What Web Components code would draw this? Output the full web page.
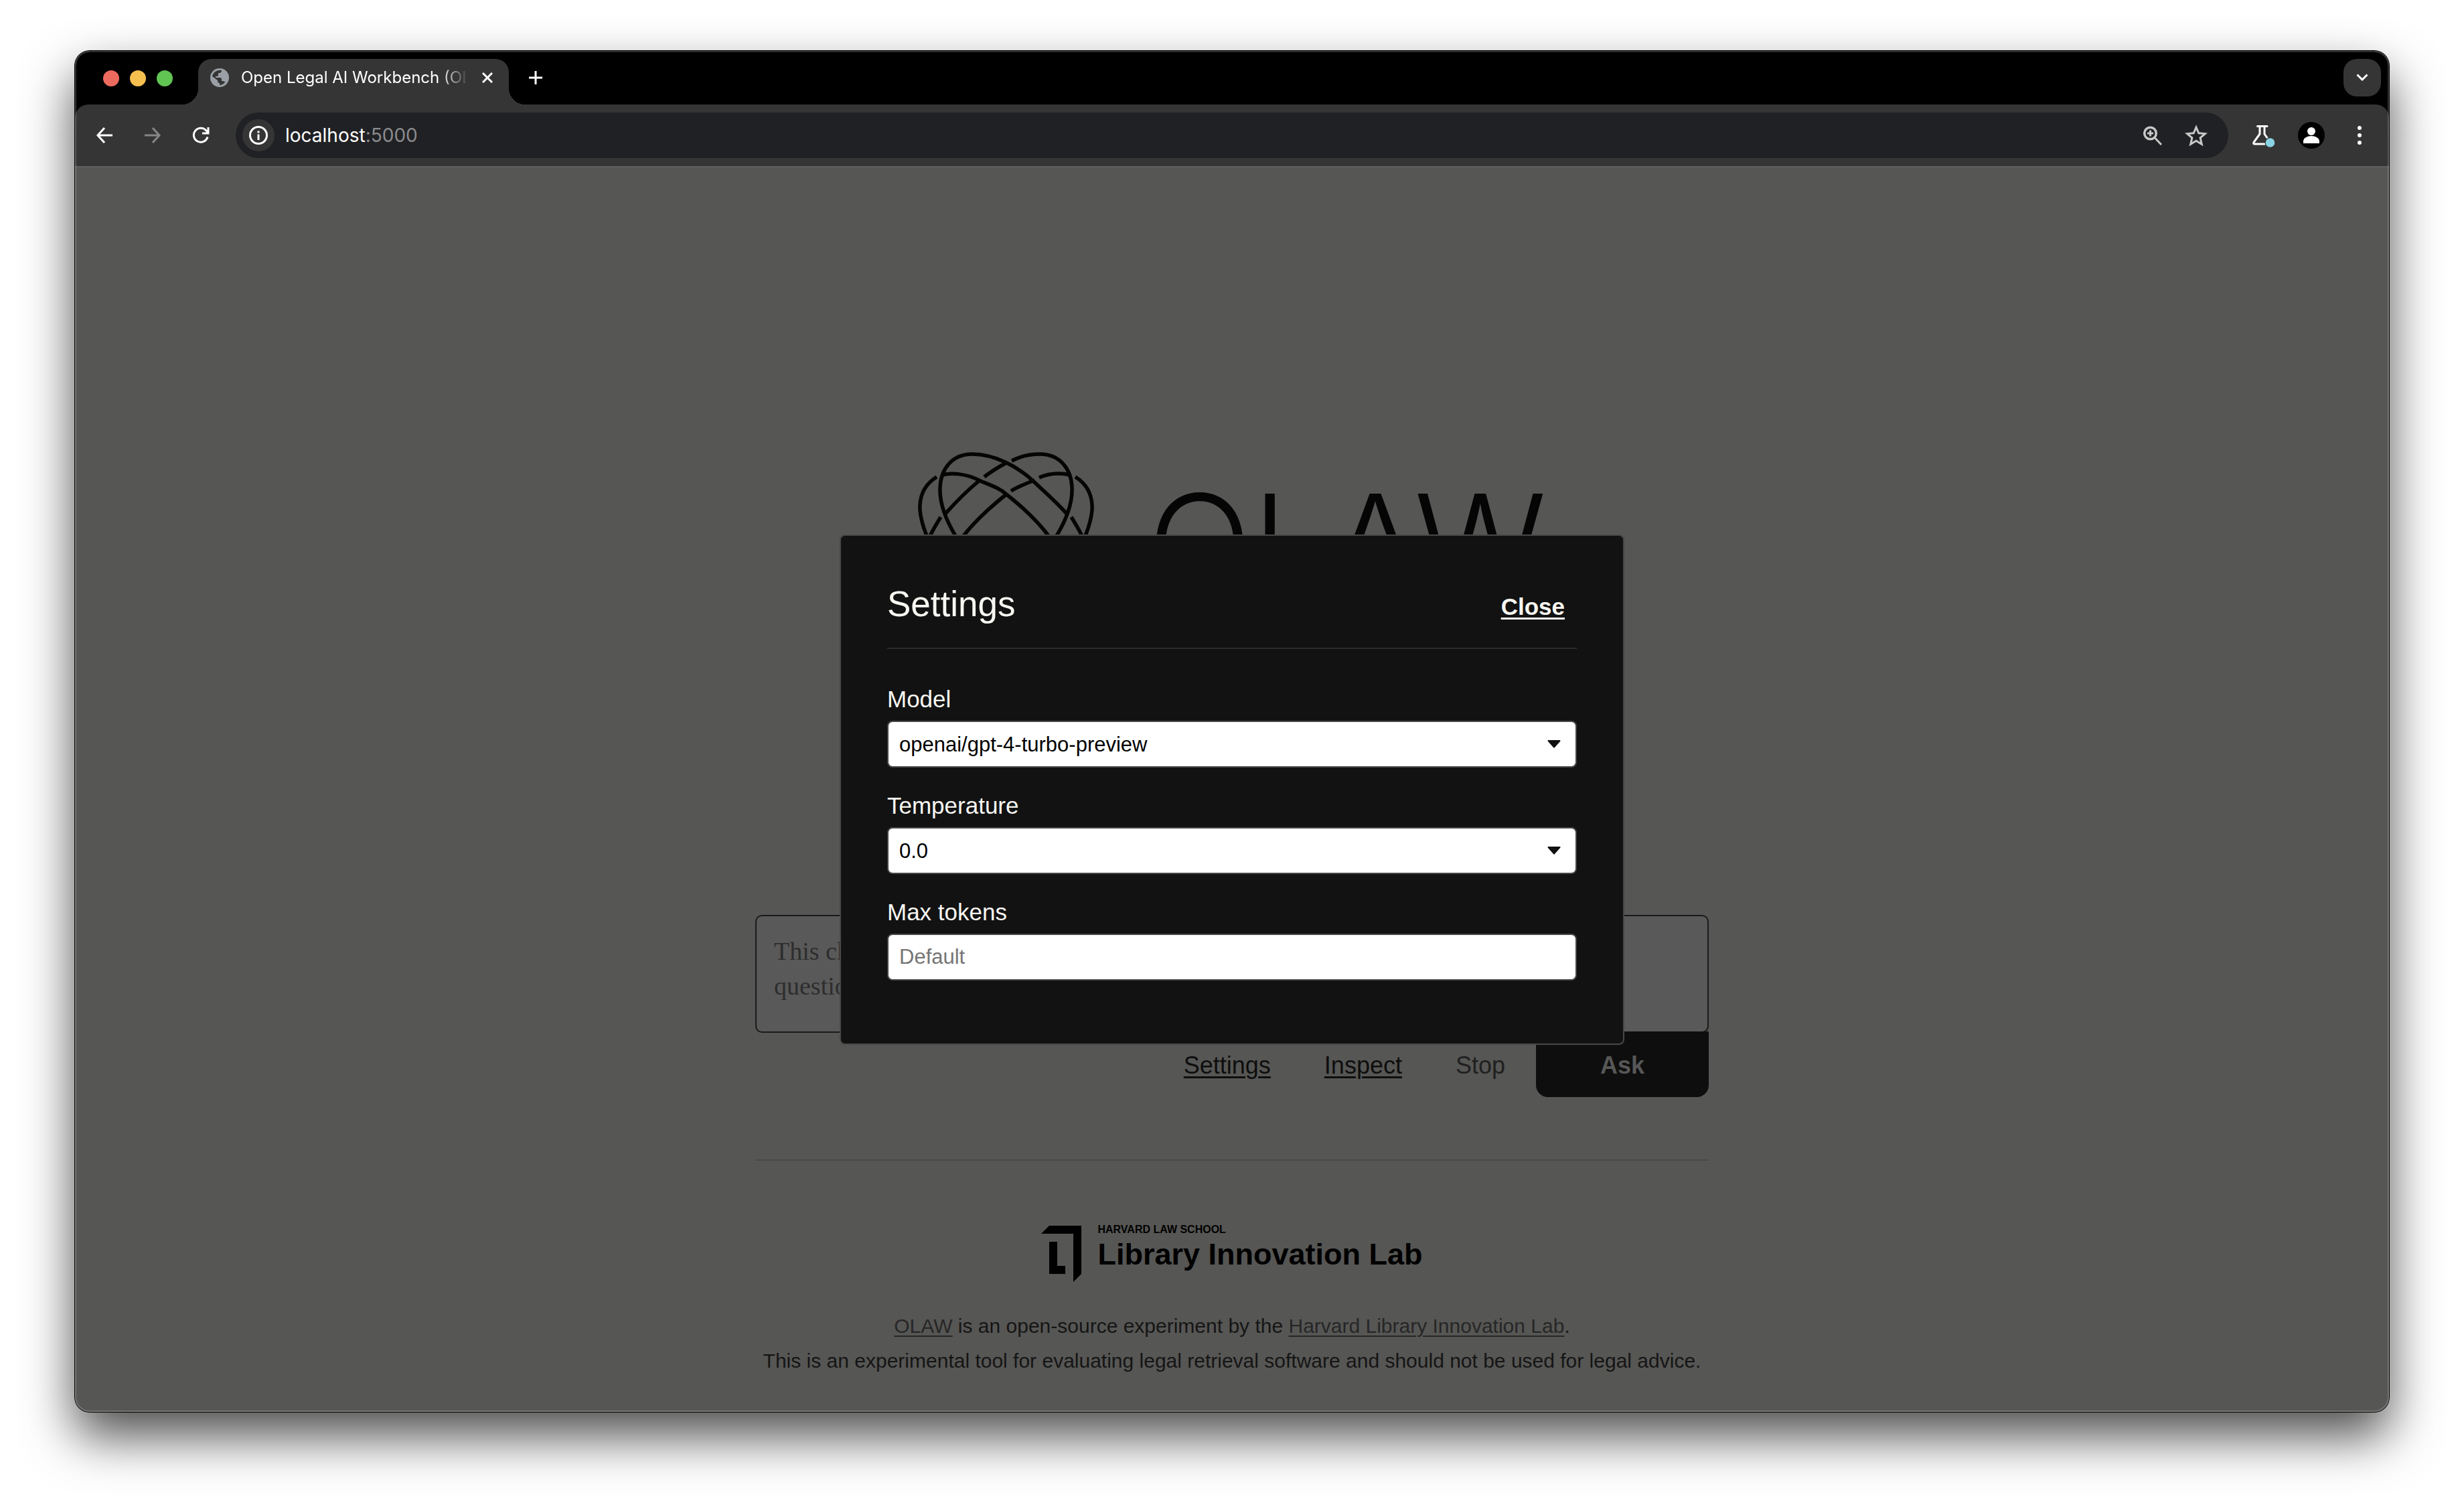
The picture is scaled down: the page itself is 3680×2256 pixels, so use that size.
<!DOCTYPE html>
<html lang="en">
<head>
<meta charset="utf-8">
<title>Open Legal AI Workbench (OLAW)</title>
<style>
  html, body { margin: 0; height: 100%; background: #fff; }
  body { font-family: "Liberation Sans", Arial, sans-serif; }
</style>
</head>
<body>
<browser-window>
  <tab-strip slot="tabs"><browser-tab>Open Legal AI Workbench (OLAW)</browser-tab></tab-strip>
  <browser-toolbar slot="toolbar" host="localhost" port=":5000"></browser-toolbar>
  <olaw-app>
    <olaw-logo slot="logo"></olaw-logo>
    <chat-form slot="chat"></chat-form>
    <page-footer slot="footer"></page-footer>
    <settings-dialog slot="dialog">
      <setting-field label="Model" kind="select" options="openai/gpt-4-turbo-preview"></setting-field>
      <setting-field label="Temperature" kind="select" options="0.0"></setting-field>
      <setting-field label="Max tokens" kind="number" placeholder="Default"></setting-field>
    </settings-dialog>
  </olaw-app>
</browser-window>

<script>
const define = (name, render) => customElements.define(name, class extends HTMLElement {
  connectedCallback() {
    if (this.shadowRoot) return;
    this.attachShadow({ mode: 'open' }).innerHTML =
      '<style>*{box-sizing:border-box}button{font:inherit;border:0;background:none;padding:0;margin:0;color:inherit}svg{display:block}</style>' + render(this);
  }
});

define('browser-window', () => `
<style>
  :host { display: flex; box-sizing: border-box; min-height: 100vh; padding: 76px 112px 148px; }
  .window { position: relative; flex: 1; display: flex; flex-direction: column; border-radius: 22px; overflow: hidden; background: #000; }
  .shadow { flex: 1; display: flex; border-radius: 22px; box-shadow: 0 0 0 1px #000, 0 36px 76px rgba(0,0,0,.7); }
  .window::after { content: ""; position: absolute; inset: 0; border-radius: 22px; box-shadow: inset 0 0 0 2px rgba(255,255,255,.2); pointer-events: none; }
  .page { flex: 1; display: flex; }
</style>
<div class="shadow"><div class="window">
  <slot name="tabs"></slot>
  <slot name="toolbar"></slot>
  <div class="page"><slot></slot></div>
</div></div>`);

define('tab-strip', () => `
<style>
  :host { display: flex; align-items: flex-start; height: 80px; box-sizing: border-box; padding: 12px 12px 0 42px; color: #fff; }
  .lights { display: flex; gap: 16px; padding-top: 17px; width: 142px; }
  .lights i { width: 24px; height: 24px; border-radius: 50%; }
  .plus { width: 56px; height: 56px; margin-left: 12px; display: grid; place-items: center; }
  .search { margin-left: auto; width: 56px; height: 56px; border-radius: 20px; background: #353535; display: grid; place-items: center; }
</style>
<div class="lights"><i style="background:#ed6a5f"></i><i style="background:#f5bf4f"></i><i style="background:#61c554"></i></div>
<slot></slot>
<button class="plus" aria-label="New tab"><svg width="20" height="20" viewBox="0 0 20 20"><path d="M10 0v20M0 10h20" stroke="#fff" stroke-width="3"/></svg></button>
<button class="search" aria-label="Search tabs"><svg width="18" height="12" viewBox="0 0 18 12"><path d="M1.500 1.500 9 9l7.500-7.500" fill="none" stroke="#fff" stroke-width="3"/></svg></button>`);

define('browser-tab', () => `
<style>
  :host { position: relative; display: flex; align-items: center; width: 464px; height: 68px; box-sizing: border-box; padding: 0 20px 12px 18px; background: #353535; border-radius: 20px 20px 0 0; }
  :host::before, :host::after { content: ""; position: absolute; bottom: 0; width: 24px; height: 24px; }
  :host::before { right: 100%; background: radial-gradient(circle at 0 0, transparent 24px, #353535 24px); }
  :host::after { left: 100%; background: radial-gradient(circle at 100% 0, transparent 24px, #353535 24px); }
  .title { flex: 1; margin: 0 20px 0 18px; font: 400 24px/32px Inter, sans-serif; color: #fff; white-space: nowrap; overflow: hidden;
    -webkit-mask-image: linear-gradient(90deg, #000 296px, transparent 340px); mask-image: linear-gradient(90deg, #000 296px, transparent 340px); }
  button { width: 24px; height: 24px; display: grid; place-items: center; }
</style>
<svg width="28" height="28" viewBox="0 0 28 28"><circle cx="14" cy="14" r="14" fill="#9aa0a6"/><path d="M17 3c0 2-1 4-3 4h-2v3c0 1-1 2-2 2H8v2h7c1 0 2 1 2 2v3h2c2 0 3 1 3 2-2 2-4 4-8 4v-3c-2 0-3-1-3-3v-1L3 12C4 7 9 2 17 3z" fill="#353535"/></svg>
<span class="title"><slot></slot></span>
<button aria-label="Close tab"><svg width="16" height="16" viewBox="0 0 16 16"><path d="M1 1l14 14M15 1L1 15" stroke="#fff" stroke-width="3"/></svg></button>`);

define('browser-toolbar', el => `
<style>
  :host { display: flex; align-items: center; height: 94px; box-sizing: border-box; padding: 0 20px; background: #353535; border-bottom: 2px solid #5f5f5f; border-radius: 20px 20px 0 0; color: #fff; }
  .nav { width: 48px; height: 48px; display: grid; place-items: center; margin-right: 24px; }
  .nav.last { margin-right: 28px; }
  .omni { flex: 1; height: 68px; border-radius: 34px; background: #202124; display: flex; align-items: center; padding: 0 24px 0 10px; margin-right: 28px; }
  .info { width: 48px; height: 48px; border-radius: 50%; background: #353535; display: grid; place-items: center; margin-right: 16px; }
  .url { flex: 1; font: 400 28px/40px Inter, sans-serif; }
  .url span { color: #8b8b8d; }
  .omni .act { width: 48px; height: 48px; display: grid; place-items: center; margin-left: 17px; }
  .tools { display: flex; gap: 24px; }
  .tools button { width: 48px; height: 48px; display: grid; place-items: center; }
</style>
<button class="nav" aria-label="Back"><svg width="24" height="24" viewBox="0 0 24 24"><path d="M12 1 2 12l10 11M2 12h22" fill="none" stroke="#fff" stroke-width="3"/></svg></button>
<button class="nav" aria-label="Forward"><svg width="24" height="24" viewBox="0 0 24 24"><path d="M12 1l10 11-10 11M22 12H0" fill="none" stroke="#868686" stroke-width="3"/></svg></button>
<button class="nav last" aria-label="Reload"><svg width="26" height="26" viewBox="0 0 26 26"><path d="M23 15.500A10.500 10.500 0 1 1 21 6l3 3.500M24 1v9h-9" fill="none" stroke="#fff" stroke-width="3"/></svg></button>
<div class="omni">
  <button class="info" aria-label="Site information"><svg width="28" height="28" viewBox="0 0 28 28"><circle cx="14" cy="14" r="12.500" fill="none" stroke="#fff" stroke-width="3"/><path d="M12.500 12.500h3V21h-3zM12.500 7.500h3v3h-3z" fill="#fff"/></svg></button>
  <div class="url">${el.getAttribute('host')}<span>${el.getAttribute('port')}</span></div>
  <button class="act" aria-label="Zoom"><svg width="28" height="29" viewBox="0 0 28 29"><g fill="none" stroke="#c7c7c7" stroke-width="3"><circle cx="10.500" cy="11" r="8.800" stroke-width="3.500"/><path d="M17 17.500 27 28M10.500 6.500v9M6 11h9"/></g></svg></button>
  <button class="act" aria-label="Bookmark"><svg width="34" height="32" viewBox="0 0 34 32"><path d="M17 4l3.800 8.800 9.600.8-7.300 6.300 2.200 9.400L17 24.300l-8.300 5 2.200-9.400-7.300-6.300 9.600-.8z" fill="none" stroke="#c7c7c7" stroke-width="3"/></svg></button>
</div>
<div class="tools">
<button aria-label="Experiments"><svg width="36" height="36" viewBox="0 0 36 36"><path d="M9.500 4.500H24M13 5v11L4 28.500q-1 2.500 1.500 2.500H21M20 5v11l5 7" fill="none" stroke="#fff" stroke-width="3" stroke-linecap="round"/><circle cx="28.500" cy="29" r="8" fill="#353535"/><circle cx="28.500" cy="29" r="6.800" fill="#8ad3e3"/></svg></button>
<button aria-label="Profile"><svg width="40" height="40" viewBox="0 0 40 40"><circle cx="20" cy="20" r="20" fill="#000"/><circle cx="20" cy="14" r="6" fill="#fff"/><path d="M8 32v-3c0-5 6-8 12-8s12 3 12 8v3z" fill="#fff"/></svg></button>
<button aria-label="Menu"><svg width="6" height="28" viewBox="0 0 6 28"><g fill="#fff"><circle cx="3" cy="3" r="3"/><circle cx="3" cy="14" r="3"/><circle cx="3" cy="25" r="3"/></g></svg></button>
</div>`);

define('olaw-app', () => `
<style>
  :host { position: relative; flex: 1; display: flex; justify-content: center; background: #565654; }
  main { display: flex; flex-direction: column; width: 1424px; max-width: 100%; }
  header { flex: 1; display: flex; align-items: center; justify-content: center; }
  .overlay { position: absolute; inset: 0; display: grid; place-items: center; }
</style>
<main>
  <header><slot name="logo"></slot></header>
  <slot name="chat"></slot>
  <slot name="footer"></slot>
</main>
<div class="overlay"><slot name="dialog"></slot></div>`);

define('olaw-logo', () => `
<style>
  :host { display: flex; align-items: center; gap: 78px; color: #050505; }
  h1 { margin: 0; padding-top: 6px; font: 350 205px/236px Inter, sans-serif; }
</style>
<svg width="266" height="266" viewBox="10 15 266 266" aria-hidden="true"><g fill="none" stroke="#050505" stroke-width="5.500">
  <path d="M67 140C52 115 43 90 44 68C45 40 62 18 92 18C125 18 160 36 185 60C205 79 220 92 233 107M240 112C245 120 251 130 256 140"/>
  <path d="M218 140C233 115 242 90 241 68C240 40 223 18 193 18C178 18 164 21 151 28M143 31C130 38 119 45 110 52M102 58C84 73 67 90 52 107M45 112C40 120 34 130 29 140"/>
  <path d="M24 140C17 122 13 108 14 94C15 75 23 62 39 52M47 49C60 46 82 46 104 58C121 65 133 69 143 78C167 97 189 117 206 140"/>
  <path d="M261 140C268 122 272 108 271 94C270 75 262 62 246 52M238 49C225 46 208 46 192 53M185 57C172 62 160 67 150 73M143 78C118 98 96 118 79 140"/>
  <path d="M24 140C50 200 95 250 143 278C190 250 235 200 261 140"/>
</g></svg>
<h1>OLAW</h1>`);

define('chat-form', () => `
<style>
  :host { display: block; font-size: 36px; line-height: 52px; color: #0e0e0e; }
  textarea { display: block; width: 100%; height: 176px; resize: none; margin: 0; padding: 26px; border: 2px solid #1a1a1a; border-radius: 10px; background: #595959; font: 38px/52px "Liberation Serif", Georgia, serif; color: #111; outline: 0; overflow: hidden; }
  textarea::placeholder { color: #2d2d2d; opacity: 1; }
  .row { position: relative; display: flex; justify-content: flex-end; align-items: center; margin-top: -2px; height: 98px; }
  button { padding: 4px 40px 0; height: 98px; }
  .link { text-decoration: underline; text-decoration-thickness: 3px; text-underline-offset: 4px; }
  .stop { color: #202020; margin-right: 6px; }
  .ask { width: 258px; background: #0e0e0e; color: #575757; font-weight: 700; border-radius: 0 0 18px 18px; }
</style>
<form>
  <textarea aria-label="Question" placeholder="This chatbot can look up court opinions to help answer&#10;questions about the law."></textarea>
  <div class="row">
    <button type="button" class="link">Settings</button>
    <button type="button" class="link">Inspect</button>
    <button type="button" class="stop" disabled>Stop</button>
    <button type="button" class="ask">Ask</button>
  </div>
</form>`);

define('page-footer', () => `
<style>
  :host { display: flex; flex-direction: column; align-items: center; margin-top: 93px; border-top: 2px solid #494947; padding: 97px 0 50px; font-size: 30px; line-height: 52px; color: #151515; }
  .lil { display: flex; gap: 24px; height: 84px; margin-bottom: 40px; color: #000; }
  .name { font-weight: 700; white-space: nowrap; }
  .name small { display: block; font-size: 16px; line-height: 12px; }
  .name strong { display: block; font-size: 45px; line-height: 62px; }
  p { margin: 0; white-space: nowrap; }
  a { color: #262626; text-decoration-thickness: 2px; text-underline-offset: 4px; }
</style>
<div class="lil">
  <svg width="60" height="84" viewBox="0 0 60 84"><path d="M0 12 12 0h48v72L48 84V12zM12 24h12v36h12v12H12z" fill="#000"/></svg>
  <div class="name"><small>HARVARD LAW SCHOOL</small><strong>Library Innovation Lab</strong></div>
</div>
<p><a href="#olaw">OLAW</a> is an open-source experiment by the <a href="#lil">Harvard Library Innovation Lab</a>.</p>
<p>This is an experimental tool for evaluating legal retrieval software and should not be used for legal advice.</p>`);

define('settings-dialog', () => `
<style>
  :host { display: block; width: 1172px; max-width: 100%; }
  dialog { position: static; display: block; width: 100%; max-width: none; margin: 0; padding: 70px 69px 94px; background: #121212; color: #f8f7f2; border: 2px solid #484848; border-radius: 8px; }
  header { display: flex; justify-content: space-between; align-items: flex-end; padding-bottom: 33px; border-bottom: 2px solid #2c2c2c; margin-bottom: 49px; }
  h2 { margin: 0; font-size: 53px; line-height: 64px; font-weight: 400; }
  button { font-size: 35px; line-height: 56px; font-weight: 700; padding-right: 18px; text-decoration: underline; text-decoration-thickness: 3px; text-underline-offset: 4px; }
  form { display: flex; flex-direction: column; gap: 31px; }
</style>
<dialog open aria-label="Settings">
  <header><h2>Settings</h2><button type="button">Close</button></header>
  <form><slot></slot></form>
</dialog>`);

define('setting-field', el => {
  const kind = el.getAttribute('kind');
  const control = kind === 'select'
    ? `<div class="wrap"><select id="c">${el.getAttribute('options').split(',').map(o => `<option>${o}</option>`).join('')}</select>
       <svg width="20" height="12" viewBox="0 0 20 12"><path d="M1 0h18q1 1 0 2l-8 9q-1 1-2 0L1 2Q0 1 1 0z" fill="#111"/></svg></div>`
    : `<input id="c" type="text" inputmode="numeric" placeholder="${el.getAttribute('placeholder')}">`;
  return `
<style>
  :host { display: flex; flex-direction: column; gap: 6px; }
  label { font-size: 35px; line-height: 52px; }
  .wrap { position: relative; }
  .wrap svg { position: absolute; right: 24px; top: 29px; pointer-events: none; }
  select, input { display: block; appearance: none; width: 100%; height: 70px; margin: 0; padding: 0 16px; border: 2px solid #484848; border-radius: 8px; background: #fff; color: #000; font: 31px "Liberation Sans", Arial, sans-serif; outline: 0; }
  input::placeholder { color: #757575; opacity: 1; }
</style>
<label for="c">${el.getAttribute('label')}</label>${control}`;
});
</script>
</body>
</html>
